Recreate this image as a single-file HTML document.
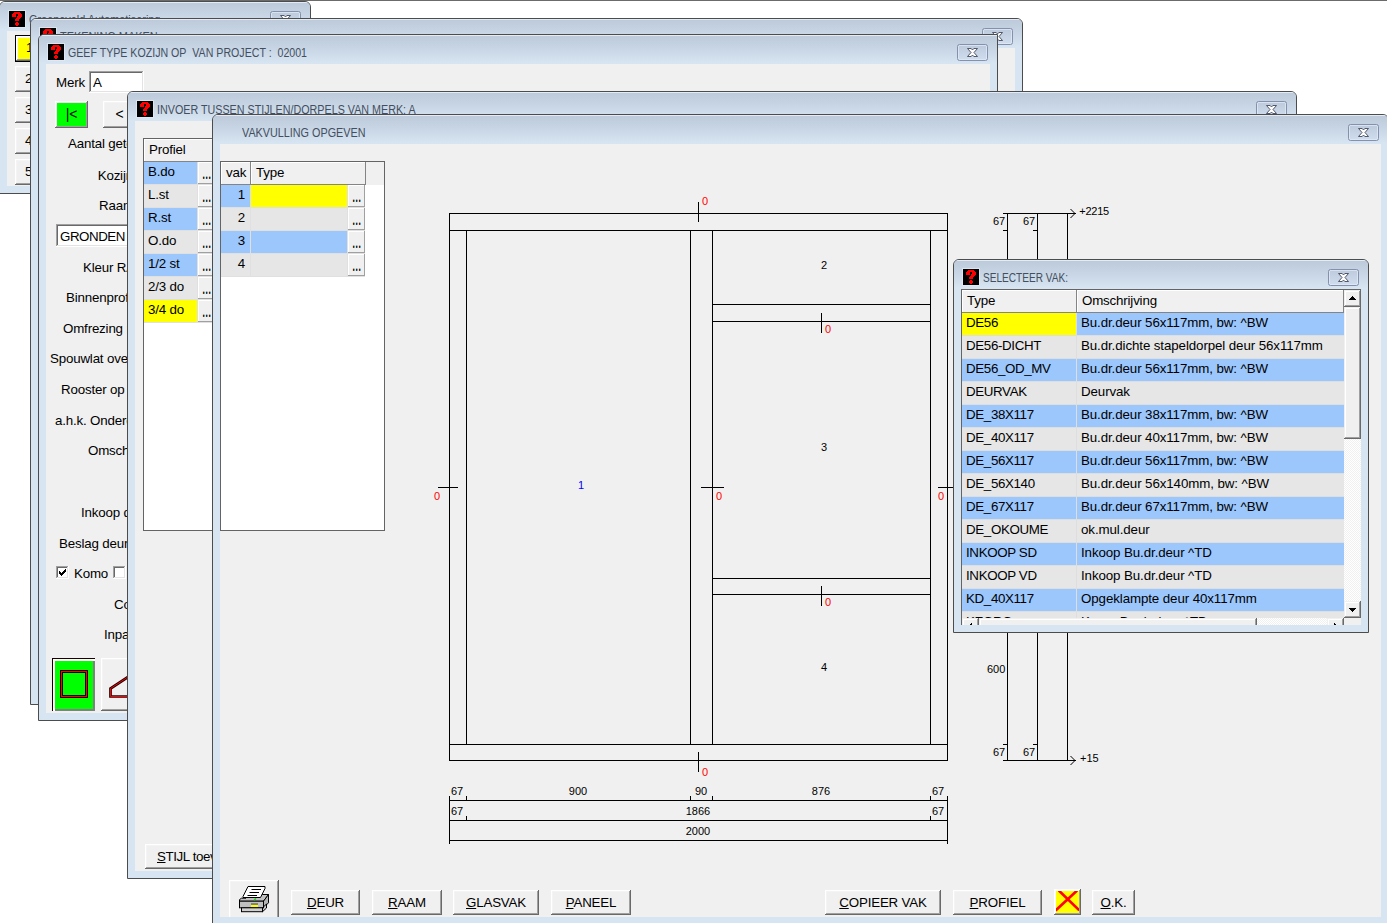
<!DOCTYPE html>
<html lang="nl"><head><meta charset="utf-8"><title>VAKVULLING OPGEVEN</title>
<style>
html,body{margin:0;padding:0}
body{width:1387px;height:923px;overflow:hidden;background:#fff;position:relative;font-family:"Liberation Sans",sans-serif;font-size:13.33px;letter-spacing:-.18px;color:#000}
*{box-sizing:border-box}
.a{position:absolute}
.topline{position:absolute;left:0;top:0;width:1387px;height:1px;background:#6b6b6b}
.win{position:absolute;border:1px solid #4c4c4c;border-radius:6px 6px 0 0;background:#d7e4f2;overflow:hidden}
.win.sq{border-radius:6px 0 0 0}
.tb{position:absolute;left:0;right:0;top:0;height:29px;background:linear-gradient(#e3ecf5 0,#e3ecf5 1px,#bccadb 1px,#c3d1e0 9px,#d7e4f2 28px)}
.tt{letter-spacing:0;position:absolute;left:29px;top:9px;height:18px;line-height:18px;font-size:12px;color:#434e5e;white-space:nowrap;transform-origin:0 50%}
.ic{position:absolute;left:8px;top:8px;width:18px;height:18px}
.cb{position:absolute;right:9px;top:9px;width:31px;height:17px;border:1px solid #8490ae;border-radius:2.5px;background:linear-gradient(#bccadc,#d0ddee);box-shadow:inset 0 0 0 1px rgba(226,235,246,.75)}
.cb svg{position:absolute;left:8px;top:2px}
.cl{position:absolute;left:7px;top:29px;right:7px;bottom:7px;background:#f0f0f0;overflow:hidden}
.o{position:absolute;left:0;top:0}
.btn{position:absolute;background:#f0f0f0;box-shadow:inset -1px -1px 0 #696969,inset 1px 1px 0 #fff,inset -2px -2px 0 #a0a0a0,inset 2px 2px 0 #f4f4f4;text-align:center;white-space:nowrap}
.btn u{text-decoration:underline;text-decoration-thickness:1px;text-underline-offset:1px}
.sbtn{position:absolute;background:#f0f0f0;box-shadow:inset -1px -1px 0 #696969,inset 1px 1px 0 #f0f0f0,inset -2px -2px 0 #a0a0a0,inset 2px 2px 0 #fff}
.lbl{position:absolute;white-space:nowrap;line-height:17px;height:17px}
.inp{position:absolute;background:#fff;box-shadow:inset -1px -1px 0 #fff,inset 1px 1px 0 #a0a0a0,inset -2px -2px 0 #e3e3e3,inset 2px 2px 0 #696969}
.grid{position:absolute;border:1px solid #646464;background:#fff;overflow:hidden;font-size:13.33px}
.hc{position:absolute;background:#f0f0f0;box-shadow:inset -1px -1px 0 #848484,inset 1px 1px 0 #fff;line-height:21px;padding-left:5px;white-space:nowrap;overflow:hidden}
.c{position:absolute;height:22px;line-height:19px;white-space:nowrap;overflow:hidden}
.dim{letter-spacing:0;font-size:11px;line-height:12px;height:12px;position:absolute;white-space:nowrap}
.mb{padding-top:0;position:absolute;background:#f0f0f0;box-shadow:inset -1px -1px 0 #a0a0a0,inset 1px 1px 0 #fff;text-align:center;width:17px;height:22px;line-height:24px;font-size:12px;letter-spacing:-.3px;text-shadow:0 1px 0 #000}
.trk{position:absolute;background-color:#f8f8f8;background-image:conic-gradient(#fff 25%,#f0f0f0 0 50%,#fff 0 75%,#f0f0f0 0);background-size:2px 2px}
</style></head>
<body>
<div class="topline"></div>
<div class="win " style="left:-1px;top:1px;width:312px;height:193px"><div class="tb"><svg class="ic" width="18" height="18" viewBox="0 0 18 18" shape-rendering="crispEdges"><rect x="0" y="0" width="18" height="18" fill="#e2edf8" opacity=".7"/><rect x="1" y="1" width="16" height="16" fill="#000"/><g fill="#f00"><rect x="6" y="2" width="6" height="1"/><rect x="5" y="3" width="8" height="1"/><rect x="4" y="4" width="4" height="1"/><rect x="10" y="4" width="4" height="1"/><rect x="4" y="5" width="4" height="1"/><rect x="10" y="5" width="4" height="1"/><rect x="4" y="6" width="4" height="1"/><rect x="9" y="6" width="5" height="1"/><rect x="9" y="7" width="4" height="1"/><rect x="8" y="8" width="4" height="1"/><rect x="7" y="9" width="4" height="1"/><rect x="7" y="10" width="4" height="1"/><rect x="8" y="12" width="2" height="1"/><rect x="7" y="13" width="4" height="1"/><rect x="7" y="14" width="4" height="1"/><rect x="8" y="15" width="2" height="1"/></g></svg><span class="tt" style="transform:scaleX(0.9080)">Groeneveld Automatisering</span><div class="cb"><svg width="13" height="11" viewBox="0 0 13 11"><path d="M1.5 1.5h3.7l1.3 1.5 1.3-1.5h3.7l-3.5 4 3.5 4h-3.7l-1.3-1.5-1.3 1.5h-3.7l3.5-4z" fill="#fdfdfd" stroke="#43485b" stroke-width=".9" stroke-linejoin="round"/></svg></div></div><div class="cl"><div class="o" style="left:-7px;top:-31px"><div class="a" style="left:15px;top:35px;width:60px;height:27px;background:#000"></div><div class="btn" style="left:16px;top:36px;width:58px;height:25px;line-height:25px;font-size:13.33px;background:#f0f0f0">1</div><div class="a" style="left:18px;top:38px;width:54px;height:21px;background:#ff0;line-height:20px;font-size:13.33px;padding-left:8px">1</div><div class="btn" style="left:15px;top:66px;width:60px;height:26px;line-height:26px;font-size:13.33px;text-align:left;padding-left:10px">2</div><div class="btn" style="left:15px;top:97px;width:60px;height:26px;line-height:26px;font-size:13.33px;text-align:left;padding-left:10px">3</div><div class="btn" style="left:15px;top:128px;width:60px;height:26px;line-height:26px;font-size:13.33px;text-align:left;padding-left:10px">4</div><div class="btn" style="left:15px;top:159px;width:60px;height:26px;line-height:26px;font-size:13.33px;text-align:left;padding-left:10px">5</div></div></div></div>
<div class="win " style="left:30px;top:18px;width:993px;height:687px"><div class="tb"><svg class="ic" width="18" height="18" viewBox="0 0 18 18" shape-rendering="crispEdges"><rect x="0" y="0" width="18" height="18" fill="#e2edf8" opacity=".7"/><rect x="1" y="1" width="16" height="16" fill="#000"/><g fill="#f00"><rect x="6" y="2" width="6" height="1"/><rect x="5" y="3" width="8" height="1"/><rect x="4" y="4" width="4" height="1"/><rect x="10" y="4" width="4" height="1"/><rect x="4" y="5" width="4" height="1"/><rect x="10" y="5" width="4" height="1"/><rect x="4" y="6" width="4" height="1"/><rect x="9" y="6" width="5" height="1"/><rect x="9" y="7" width="4" height="1"/><rect x="8" y="8" width="4" height="1"/><rect x="7" y="9" width="4" height="1"/><rect x="7" y="10" width="4" height="1"/><rect x="8" y="12" width="2" height="1"/><rect x="7" y="13" width="4" height="1"/><rect x="7" y="14" width="4" height="1"/><rect x="8" y="15" width="2" height="1"/></g></svg><span class="tt" style="transform:scaleX(0.9090)">TEKENING MAKEN</span><div class="cb"><svg width="13" height="11" viewBox="0 0 13 11"><path d="M1.5 1.5h3.7l1.3 1.5 1.3-1.5h3.7l-3.5 4 3.5 4h-3.7l-1.3-1.5-1.3 1.5h-3.7l3.5-4z" fill="#fdfdfd" stroke="#43485b" stroke-width=".9" stroke-linejoin="round"/></svg></div></div><div class="cl"><div class="o" style="left:-38px;top:-48px"></div></div></div>
<div class="win sq" style="left:38px;top:34px;width:960px;height:687px"><div class="tb"><svg class="ic" width="18" height="18" viewBox="0 0 18 18" shape-rendering="crispEdges"><rect x="0" y="0" width="18" height="18" fill="#e2edf8" opacity=".7"/><rect x="1" y="1" width="16" height="16" fill="#000"/><g fill="#f00"><rect x="6" y="2" width="6" height="1"/><rect x="5" y="3" width="8" height="1"/><rect x="4" y="4" width="4" height="1"/><rect x="10" y="4" width="4" height="1"/><rect x="4" y="5" width="4" height="1"/><rect x="10" y="5" width="4" height="1"/><rect x="4" y="6" width="4" height="1"/><rect x="9" y="6" width="5" height="1"/><rect x="9" y="7" width="4" height="1"/><rect x="8" y="8" width="4" height="1"/><rect x="7" y="9" width="4" height="1"/><rect x="7" y="10" width="4" height="1"/><rect x="8" y="12" width="2" height="1"/><rect x="7" y="13" width="4" height="1"/><rect x="7" y="14" width="4" height="1"/><rect x="8" y="15" width="2" height="1"/></g></svg><span class="tt" style="transform:scaleX(0.8850)">GEEF TYPE KOZIJN OP&nbsp; VAN PROJECT :&nbsp; 02001</span><div class="cb"><svg width="13" height="11" viewBox="0 0 13 11"><path d="M1.5 1.5h3.7l1.3 1.5 1.3-1.5h3.7l-3.5 4 3.5 4h-3.7l-1.3-1.5-1.3 1.5h-3.7l3.5-4z" fill="#fdfdfd" stroke="#43485b" stroke-width=".9" stroke-linejoin="round"/></svg></div></div><div class="cl"><div class="o" style="left:-46px;top:-64px"><div class="lbl" style="left:56px;top:73.9px;font-size:13.33px;">Merk</div><div class="inp" style="left:89px;top:71px;width:55px;height:22px"></div><div class="lbl" style="left:93px;top:73.9px;font-size:13.33px;">A</div><div class="btn" style="left:55px;top:101px;width:33px;height:27px;box-shadow:inset -1px -1px 0 #696969,inset 1px 1px 0 #fff,inset -2px -2px 0 #a0a0a0;padding:2px"><div style="background:#0f0;width:29px;height:23px;line-height:22px;font-size:14px">|&lt;</div></div><div class="btn" style="left:103px;top:101px;width:33px;height:27px;line-height:27px;font-size:14px;">&lt;</div><div class="lbl" style="left:68px;top:134.9px;font-size:13.33px;">Aantal getekend</div><div class="lbl" style="left:97.7px;top:166.9px;font-size:13.33px;">Kozijnhout</div><div class="lbl" style="left:99px;top:196.9px;font-size:13.33px;">Raamhout</div><div class="lbl" style="left:83px;top:258.9px;font-size:13.33px;">Kleur RAL</div><div class="lbl" style="left:66px;top:288.9px;font-size:13.33px;">Binnenprofiel</div><div class="lbl" style="left:63px;top:319.9px;font-size:13.33px;">Omfrezing rondom</div><div class="lbl" style="left:50px;top:349.9px;font-size:13.33px;">Spouwlat over</div><div class="lbl" style="left:61px;top:380.9px;font-size:13.33px;">Rooster op</div><div class="lbl" style="left:55px;top:411.9px;font-size:13.33px;">a.h.k. Onderdorpel</div><div class="lbl" style="left:88px;top:441.9px;font-size:13.33px;">Omschrijving</div><div class="lbl" style="left:81px;top:503.9px;font-size:13.33px;">Inkoop deur</div><div class="lbl" style="left:59px;top:534.9px;font-size:13.33px;">Beslag deur</div><div class="lbl" style="left:74px;top:564.9px;font-size:13.33px;">Komo</div><div class="lbl" style="left:114px;top:595.9px;font-size:13.33px;">Code</div><div class="lbl" style="left:104px;top:625.9px;font-size:13.33px;">Inpakken</div><div class="inp" style="left:56px;top:224px;width:120px;height:23px"></div><div class="lbl" style="left:60px;top:227.9px;font-size:13.33px;letter-spacing:-.45px">GRONDEN</div><div class="inp" style="left:56px;top:566px;width:13px;height:13px"></div><svg class="a" style="left:59px;top:569px" width="7" height="7" viewBox="0 0 7 7" shape-rendering="crispEdges"><path d="M0 2v3l2 2 5-5V-1L2 4z" fill="#000"/></svg><div class="inp" style="left:113px;top:566px;width:13px;height:13px"></div><div class="a" style="left:52px;top:658px;width:43px;height:53px;background:#0f0;box-shadow:inset 1px 1px 0 #1a0000,inset 3px 3px 0 #fff,inset -2px -2px 0 #808080"></div><div class="a" style="left:60px;top:670px;width:28px;height:28px;border:1px solid #200;"><div style="width:26px;height:26px;border:1px solid #f00"><div style="width:24px;height:24px;border:1px solid #200"></div></div></div><div class="btn" style="left:101px;top:658px;width:43px;height:53px;line-height:53px;font-size:13.33px;"></div><svg class="a" style="left:101px;top:658px" width="43" height="53" viewBox="101 658 43 53"><path d="M110.5 696.5V688.5L140 669V696.5z" fill="none" stroke="#200" stroke-width="2.7"/><path d="M110.5 696.5V688.5L140 669V696.5z" fill="none" stroke="#f00" stroke-width="1"/></svg></div></div></div>
<div class="win " style="left:127px;top:91px;width:1170px;height:788px"><div class="tb"><svg class="ic" width="18" height="18" viewBox="0 0 18 18" shape-rendering="crispEdges"><rect x="0" y="0" width="18" height="18" fill="#e2edf8" opacity=".7"/><rect x="1" y="1" width="16" height="16" fill="#000"/><g fill="#f00"><rect x="6" y="2" width="6" height="1"/><rect x="5" y="3" width="8" height="1"/><rect x="4" y="4" width="4" height="1"/><rect x="10" y="4" width="4" height="1"/><rect x="4" y="5" width="4" height="1"/><rect x="10" y="5" width="4" height="1"/><rect x="4" y="6" width="4" height="1"/><rect x="9" y="6" width="5" height="1"/><rect x="9" y="7" width="4" height="1"/><rect x="8" y="8" width="4" height="1"/><rect x="7" y="9" width="4" height="1"/><rect x="7" y="10" width="4" height="1"/><rect x="8" y="12" width="2" height="1"/><rect x="7" y="13" width="4" height="1"/><rect x="7" y="14" width="4" height="1"/><rect x="8" y="15" width="2" height="1"/></g></svg><span class="tt" style="transform:scaleX(0.8950)">INVOER TUSSEN STIJLEN/DORPELS VAN MERK: A</span><div class="cb"><svg width="13" height="11" viewBox="0 0 13 11"><path d="M1.5 1.5h3.7l1.3 1.5 1.3-1.5h3.7l-3.5 4 3.5 4h-3.7l-1.3-1.5-1.3 1.5h-3.7l3.5-4z" fill="#fdfdfd" stroke="#43485b" stroke-width=".9" stroke-linejoin="round"/></svg></div></div><div class="cl"><div class="o" style="left:-135px;top:-121px"><div class="grid" style="left:143px;top:138px;width:242px;height:393px"><div class="a" style="left:0;top:23px;width:71px;height:161px;background:#e0e0e0"></div><div class="hc" style="left:0;top:0;width:72px;height:23px">Profiel</div><div class="a" style="left:72px;top:0;width:200px;height:23px;background:#f0f0f0"></div><div class="c" style="left:0;top:23px;width:53px;background:#9cc7fd;padding-left:4px">B.do</div><div class="mb" style="left:54px;top:23px">...</div><div class="c" style="left:0;top:46px;width:53px;background:#e6e6e6;padding-left:4px">L.st</div><div class="mb" style="left:54px;top:46px">...</div><div class="c" style="left:0;top:69px;width:53px;background:#9cc7fd;padding-left:4px">R.st</div><div class="mb" style="left:54px;top:69px">...</div><div class="c" style="left:0;top:92px;width:53px;background:#e6e6e6;padding-left:4px">O.do</div><div class="mb" style="left:54px;top:92px">...</div><div class="c" style="left:0;top:115px;width:53px;background:#9cc7fd;padding-left:4px">1/2 st</div><div class="mb" style="left:54px;top:115px">...</div><div class="c" style="left:0;top:138px;width:53px;background:#e6e6e6;padding-left:4px">2/3 do</div><div class="mb" style="left:54px;top:138px">...</div><div class="c" style="left:0;top:161px;width:53px;background:#ffff00;padding-left:4px">3/4 do</div><div class="mb" style="left:54px;top:161px">...</div></div><div class="btn" style="left:145px;top:844px;width:102px;height:25px;line-height:25px;font-size:13.33px;text-align:left;padding-left:12px;letter-spacing:-.4px"><u>S</u>TIJL toevoegen</div></div></div></div>
<div class="win " style="left:212px;top:114px;width:1177px;height:811px"><div class="tb"><span class="tt" style="transform:scaleX(0.9000)">VAKVULLING OPGEVEN</span><div class="cb"><svg width="13" height="11" viewBox="0 0 13 11"><path d="M1.5 1.5h3.7l1.3 1.5 1.3-1.5h3.7l-3.5 4 3.5 4h-3.7l-1.3-1.5-1.3 1.5h-3.7l3.5-4z" fill="#fdfdfd" stroke="#43485b" stroke-width=".9" stroke-linejoin="round"/></svg></div></div><div class="cl"><div class="o" style="left:-220px;top:-144px"><div class="grid" style="left:220px;top:161px;width:165px;height:370px"><div class="a" style="left:0;top:0;width:163px;height:23px;background:#f0f0f0"></div><div class="a" style="left:0;top:23px;width:144px;height:92px;background:#e0e0e0"></div><div class="hc" style="left:0;top:0;width:30px;height:23px;padding-left:5px">vak</div><div class="hc" style="left:30px;top:0;width:115px;height:23px">Type</div><div class="c" style="left:0;top:23px;width:29px;background:#9cc7fd;text-align:right;padding-right:5px">1</div><div class="c" style="left:30px;top:23px;width:96px;background:#ffff00"></div><div class="mb" style="left:127px;top:23px">...</div><div class="c" style="left:0;top:46px;width:29px;background:#e6e6e6;text-align:right;padding-right:5px">2</div><div class="c" style="left:30px;top:46px;width:96px;background:#e6e6e6"></div><div class="mb" style="left:127px;top:46px">...</div><div class="c" style="left:0;top:69px;width:29px;background:#9cc7fd;text-align:right;padding-right:5px">3</div><div class="c" style="left:30px;top:69px;width:96px;background:#9cc7fd"></div><div class="mb" style="left:127px;top:69px">...</div><div class="c" style="left:0;top:92px;width:29px;background:#e6e6e6;text-align:right;padding-right:5px">4</div><div class="c" style="left:30px;top:92px;width:96px;background:#e6e6e6"></div><div class="mb" style="left:127px;top:92px">...</div></div><svg class="a" style="left:0;top:0" width="1387" height="923" viewBox="0 0 1387 923" shape-rendering="crispEdges" fill="#000"><rect x="449" y="213" width="499" height="1"/><rect x="449" y="760" width="499" height="1"/><rect x="449" y="213" width="1" height="548"/><rect x="947" y="213" width="1" height="548"/><rect x="449" y="230" width="499" height="1"/><rect x="449" y="744" width="499" height="1"/><rect x="466" y="230" width="1" height="515"/><rect x="930" y="230" width="1" height="515"/><rect x="690" y="230" width="1" height="515"/><rect x="712" y="230" width="1" height="515"/><rect x="712" y="304" width="219" height="1"/><rect x="712" y="321" width="219" height="1"/><rect x="712" y="578" width="219" height="1"/><rect x="712" y="594" width="219" height="1"/><rect x="698" y="202" width="1" height="20"/><rect x="698" y="752" width="1" height="20"/><rect x="821" y="313" width="1" height="20"/><rect x="821" y="586" width="1" height="20"/><rect x="438" y="487" width="20" height="1"/><rect x="701" y="487" width="23" height="1"/><rect x="938" y="487" width="20" height="1"/><rect x="449" y="796" width="1" height="48"/><rect x="947" y="796" width="1" height="48"/><rect x="449" y="800" width="499" height="1"/><rect x="449" y="820" width="499" height="1"/><rect x="449" y="840" width="499" height="1"/><rect x="466" y="796" width="1" height="5"/><rect x="690" y="796" width="1" height="5"/><rect x="712" y="796" width="1" height="5"/><rect x="930" y="796" width="1" height="5"/><rect x="466" y="816" width="1" height="5"/><rect x="930" y="816" width="1" height="5"/><rect x="1007" y="213" width="1" height="548"/><rect x="1037" y="213" width="1" height="548"/><rect x="1067" y="213" width="1" height="548"/><rect x="1003" y="213" width="73" height="1"/><rect x="1003" y="760" width="73" height="1"/><rect x="1003" y="230" width="5" height="1"/><rect x="1033" y="230" width="5" height="1"/><rect x="1003" y="744" width="5" height="1"/><rect x="1033" y="744" width="5" height="1"/></svg><svg class="a" style="left:0;top:0" width="1387" height="923" viewBox="0 0 1387 923" fill="none" stroke="#000" stroke-width="1"><path d="M1070.5 209l4.5 4.5-4.5 4.5M1070.5 756l4.5 4.5-4.5 4.5"/></svg><div class="dim" style="left:675px;top:195.0px;width:60px;text-align:center;color:#f00">0</div><div class="dim" style="left:675px;top:766.0px;width:60px;text-align:center;color:#f00">0</div><div class="dim" style="left:798px;top:323.0px;width:60px;text-align:center;color:#f00">0</div><div class="dim" style="left:798px;top:596.0px;width:60px;text-align:center;color:#f00">0</div><div class="dim" style="left:407px;top:490.0px;width:60px;text-align:center;color:#f00">0</div><div class="dim" style="left:689px;top:490.0px;width:60px;text-align:center;color:#f00">0</div><div class="dim" style="left:911px;top:490.0px;width:60px;text-align:center;color:#f00">0</div><div class="dim" style="left:551px;top:479.0px;width:60px;text-align:center;color:#00f">1</div><div class="dim" style="left:794px;top:259.0px;width:60px;text-align:center;color:#000">2</div><div class="dim" style="left:794px;top:441.0px;width:60px;text-align:center;color:#000">3</div><div class="dim" style="left:794px;top:661.0px;width:60px;text-align:center;color:#000">4</div><div class="dim" style="left:451.0px;top:785.0px;color:#000;">67</div><div class="dim" style="left:548px;top:785.0px;width:60px;text-align:center;color:#000">900</div><div class="dim" style="left:671px;top:785.0px;width:60px;text-align:center;color:#000">90</div><div class="dim" style="left:791px;top:785.0px;width:60px;text-align:center;color:#000">876</div><div class="dim" style="left:932.0px;top:785.0px;color:#000;">67</div><div class="dim" style="left:451.0px;top:805.0px;color:#000;">67</div><div class="dim" style="left:668px;top:805.0px;width:60px;text-align:center;color:#000">1866</div><div class="dim" style="left:932.0px;top:805.0px;color:#000;">67</div><div class="dim" style="left:668px;top:825.0px;width:60px;text-align:center;color:#000">2000</div><div class="dim" style="left:993.0px;top:215.0px;color:#000;">67</div><div class="dim" style="left:1023.0px;top:215.0px;color:#000;">67</div><div class="dim" style="left:1079.3px;top:205.0px;color:#000;letter-spacing:-.25px">+2215</div><div class="dim" style="left:993.0px;top:746.0px;color:#000;">67</div><div class="dim" style="left:1023.0px;top:746.0px;color:#000;">67</div><div class="dim" style="left:1080.0px;top:752.0px;color:#000;">+15</div><div class="dim" style="left:987.0px;top:663.0px;color:#000;">600</div><div class="btn" style="left:229px;top:880px;width:50px;height:44px;line-height:44px;font-size:13.33px;"></div><svg class="a" style="left:226px;top:876px" width="58" height="44" viewBox="226 876 58 44">
<path d="M239.500 901.200V899.600L241.500 898.200H246L249 894.500H268.500L263.500 901.200z" fill="#c0c0c0" stroke="#000" stroke-width="1"/>
<path d="M263.500 901.200L268.500 894.500V902.800L263.500 907.800z" fill="#b4b4b4" stroke="#000" stroke-width="1"/>
<path d="M262.500 907.800L266.500 904V908L262.500 911.700z" fill="#c8c8c8" stroke="#000" stroke-width="1"/>
<path d="M248 886.500H265V888.500L260.500 897.500H243L243 896.500z" fill="#fff" stroke="#000" stroke-width="1"/>
<path d="M251.500 889.500H261M249.500 892.500H259M247.500 895.500H257" stroke="#000" stroke-width="1" fill="none"/>
<rect x="239.500" y="901.200" width="24" height="6.600" fill="#c0c0c0" stroke="#000" stroke-width="1"/>
<rect x="241.500" y="907.800" width="21" height="3.900" fill="#d0d0d0" stroke="#000" stroke-width="1"/>
<rect x="251" y="903" width="7" height="2" fill="#808080"/>
<rect x="251" y="905" width="7" height="2" fill="#ff0"/>
<path d="M254 900.300l2-1.800" stroke="#0d0" stroke-width="1.200"/>
</svg><div class="btn" style="left:291px;top:890px;width:69px;height:25px;line-height:25px;font-size:13.33px;"><u>D</u>EUR</div><div class="btn" style="left:372px;top:890px;width:70px;height:25px;line-height:25px;font-size:13.33px;"><u>R</u>AAM</div><div class="btn" style="left:453px;top:890px;width:86px;height:25px;line-height:25px;font-size:13.33px;"><u>G</u>LASVAK</div><div class="btn" style="left:551px;top:890px;width:80px;height:25px;line-height:25px;font-size:13.33px;"><u>P</u>ANEEL</div><div class="btn" style="left:825px;top:890px;width:116px;height:25px;line-height:25px;font-size:13.33px;"><u>C</u>OPIEER VAK</div><div class="btn" style="left:953px;top:890px;width:89px;height:25px;line-height:25px;font-size:13.33px;"><u>P</u>ROFIEL</div><div class="btn" style="left:1054px;top:889px;width:27px;height:26px;line-height:26px;font-size:13.33px;box-shadow:inset -1px -1px 0 #696969,inset 1px 1px 0 #fff,inset -2px -2px 0 #a0a0a0,inset 2px 2px 0 #fff"></div><svg class="a" style="left:1056px;top:891px" width="23" height="22" viewBox="0 0 23 22"><rect width="23" height="22" fill="#ff0"/><path d="M2.8 -0.5L23.3 19.3M21.1 -0.5L-0.4 19.5" stroke="#f00" stroke-width="2.6" fill="none"/></svg><div class="btn" style="left:1092px;top:890px;width:43px;height:25px;line-height:25px;font-size:13.33px;"><u>O</u>.K.</div></div></div></div>
<div class="win " style="left:953px;top:259px;width:416px;height:374px"><div class="tb"><svg class="ic" width="18" height="18" viewBox="0 0 18 18" shape-rendering="crispEdges"><rect x="0" y="0" width="18" height="18" fill="#e2edf8" opacity=".7"/><rect x="1" y="1" width="16" height="16" fill="#000"/><g fill="#f00"><rect x="6" y="2" width="6" height="1"/><rect x="5" y="3" width="8" height="1"/><rect x="4" y="4" width="4" height="1"/><rect x="10" y="4" width="4" height="1"/><rect x="4" y="5" width="4" height="1"/><rect x="10" y="5" width="4" height="1"/><rect x="4" y="6" width="4" height="1"/><rect x="9" y="6" width="5" height="1"/><rect x="9" y="7" width="4" height="1"/><rect x="8" y="8" width="4" height="1"/><rect x="7" y="9" width="4" height="1"/><rect x="7" y="10" width="4" height="1"/><rect x="8" y="12" width="2" height="1"/><rect x="7" y="13" width="4" height="1"/><rect x="7" y="14" width="4" height="1"/><rect x="8" y="15" width="2" height="1"/></g></svg><span class="tt" style="transform:scaleX(0.8400)">SELECTEER VAK:</span><div class="cb"><svg width="13" height="11" viewBox="0 0 13 11"><path d="M1.5 1.5h3.7l1.3 1.5 1.3-1.5h3.7l-3.5 4 3.5 4h-3.7l-1.3-1.5-1.3 1.5h-3.7l3.5-4z" fill="#fdfdfd" stroke="#43485b" stroke-width=".9" stroke-linejoin="round"/></svg></div></div><div class="cl"><div class="o" style="left:-961px;top:-289px"><div class="grid" style="left:961px;top:289px;width:401px;height:347px;background:#f0f0f0;border-right:none"><div class="a" style="left:0;top:23px;width:382px;height:322px;background:#dedede"></div><div class="hc" style="left:0;top:0;width:115px;height:23px">Type</div><div class="hc" style="left:115px;top:0;width:267px;height:23px">Omschrijving</div><div class="c" style="left:0;top:23px;width:114px;background:#ffff00;padding-left:4px;letter-spacing:-.35px">DE56</div><div class="c" style="left:115px;top:23px;width:267px;background:#9cc7fd;padding-left:4px;letter-spacing:-.1px">Bu.dr.deur 56x117mm, bw: ^BW</div><div class="c" style="left:0;top:46px;width:114px;background:#e6e6e6;padding-left:4px;letter-spacing:-.35px">DE56-DICHT</div><div class="c" style="left:115px;top:46px;width:267px;background:#e6e6e6;padding-left:4px;letter-spacing:-.1px">Bu.dr.dichte stapeldorpel deur 56x117mm</div><div class="c" style="left:0;top:69px;width:114px;background:#9cc7fd;padding-left:4px;letter-spacing:-.35px">DE56_OD_MV</div><div class="c" style="left:115px;top:69px;width:267px;background:#9cc7fd;padding-left:4px;letter-spacing:-.1px">Bu.dr.deur 56x117mm, bw: ^BW</div><div class="c" style="left:0;top:92px;width:114px;background:#e6e6e6;padding-left:4px;letter-spacing:-.35px">DEURVAK</div><div class="c" style="left:115px;top:92px;width:267px;background:#e6e6e6;padding-left:4px;letter-spacing:-.1px">Deurvak</div><div class="c" style="left:0;top:115px;width:114px;background:#9cc7fd;padding-left:4px;letter-spacing:-.35px">DE_38X117</div><div class="c" style="left:115px;top:115px;width:267px;background:#9cc7fd;padding-left:4px;letter-spacing:-.1px">Bu.dr.deur 38x117mm, bw: ^BW</div><div class="c" style="left:0;top:138px;width:114px;background:#e6e6e6;padding-left:4px;letter-spacing:-.35px">DE_40X117</div><div class="c" style="left:115px;top:138px;width:267px;background:#e6e6e6;padding-left:4px;letter-spacing:-.1px">Bu.dr.deur 40x117mm, bw: ^BW</div><div class="c" style="left:0;top:161px;width:114px;background:#9cc7fd;padding-left:4px;letter-spacing:-.35px">DE_56X117</div><div class="c" style="left:115px;top:161px;width:267px;background:#9cc7fd;padding-left:4px;letter-spacing:-.1px">Bu.dr.deur 56x117mm, bw: ^BW</div><div class="c" style="left:0;top:184px;width:114px;background:#e6e6e6;padding-left:4px;letter-spacing:-.35px">DE_56X140</div><div class="c" style="left:115px;top:184px;width:267px;background:#e6e6e6;padding-left:4px;letter-spacing:-.1px">Bu.dr.deur 56x140mm, bw: ^BW</div><div class="c" style="left:0;top:207px;width:114px;background:#9cc7fd;padding-left:4px;letter-spacing:-.35px">DE_67X117</div><div class="c" style="left:115px;top:207px;width:267px;background:#9cc7fd;padding-left:4px;letter-spacing:-.1px">Bu.dr.deur 67x117mm, bw: ^BW</div><div class="c" style="left:0;top:230px;width:114px;background:#e6e6e6;padding-left:4px;letter-spacing:-.35px">DE_OKOUME</div><div class="c" style="left:115px;top:230px;width:267px;background:#e6e6e6;padding-left:4px;letter-spacing:-.1px">ok.mul.deur</div><div class="c" style="left:0;top:253px;width:114px;background:#9cc7fd;padding-left:4px;letter-spacing:-.35px">INKOOP SD</div><div class="c" style="left:115px;top:253px;width:267px;background:#9cc7fd;padding-left:4px;letter-spacing:-.1px">Inkoop Bu.dr.deur ^TD</div><div class="c" style="left:0;top:276px;width:114px;background:#e6e6e6;padding-left:4px;letter-spacing:-.35px">INKOOP VD</div><div class="c" style="left:115px;top:276px;width:267px;background:#e6e6e6;padding-left:4px;letter-spacing:-.1px">Inkoop Bu.dr.deur ^TD</div><div class="c" style="left:0;top:299px;width:114px;background:#9cc7fd;padding-left:4px;letter-spacing:-.35px">KD_40X117</div><div class="c" style="left:115px;top:299px;width:267px;background:#9cc7fd;padding-left:4px;letter-spacing:-.1px">Opgeklampte deur 40x117mm</div><div class="c" style="left:0;top:322px;width:114px;background:#e6e6e6;padding-left:4px;letter-spacing:-.35px">KEGRO</div><div class="c" style="left:115px;top:322px;width:267px;background:#e6e6e6;padding-left:4px;letter-spacing:-.1px">Kegro Bu.dr.deur ^TD</div><div class="trk" style="left:382px;top:0;width:17px;height:328px"></div><div class="sbtn" style="left:382px;top:0;width:17px;height:17px"></div><svg class="a" style="left:387px;top:6px" width="7" height="4" viewBox="0 0 7 4" shape-rendering="crispEdges"><path d="M3 0h1v1h1v1h1v1h1v1h-7v-1h1v-1h1v-1h1z"/></svg><div class="sbtn" style="left:382px;top:17px;width:17px;height:132px"></div><div class="sbtn" style="left:382px;top:311px;width:17px;height:17px"></div><svg class="a" style="left:387px;top:318px" width="7" height="4" viewBox="0 0 7 4" shape-rendering="crispEdges"><path d="M0 0h7v1h-1v1h-1v1h-1v1h-1v-1h-1v-1h-1v-1h-1z"/></svg><div class="trk" style="left:0;top:328px;width:382px;height:17px"></div><div class="sbtn" style="left:0;top:328px;width:17px;height:17px"></div><svg class="a" style="left:6px;top:333px" width="4" height="7" viewBox="0 0 4 7" shape-rendering="crispEdges"><path d="M3 0h1v7h-1v-1h-1v-1h-1v-1h-1v-1h1v-1h1v-1h1z"/></svg><div class="sbtn" style="left:17px;top:328px;width:278px;height:17px"></div><div class="sbtn" style="left:365px;top:328px;width:17px;height:17px"></div><svg class="a" style="left:372px;top:333px" width="4" height="7" viewBox="0 0 4 7" shape-rendering="crispEdges"><path d="M0 0h1v1h1v1h1v1h1v1h-1v1h-1v1h-1v1h-1z"/></svg><div class="a" style="left:382px;top:328px;width:17px;height:17px;background:#f0f0f0"></div></div></div></div></div>
</body></html>
